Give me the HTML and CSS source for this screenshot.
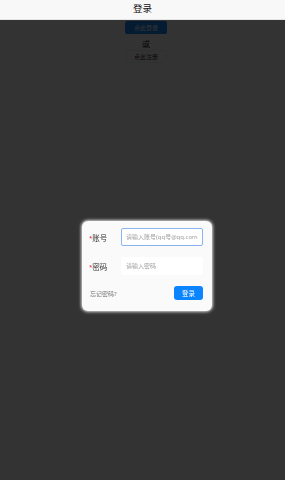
FILE: index.html
```html
<!DOCTYPE html>
<html>

<head>
    <meta charset="utf-8">
    <title>登录</title>
    <link rel="stylesheet" href="styles.css">
</head>

<body>
    <div class="navbar">登录</div>

    <div class="page">
        <button class="btn btn-primary">点此登录</button>
        <div class="or">或</div>
        <button class="btn btn-plain">点此注册</button>
    </div>

    <!-- login popup -->
    <div class="mask">
        <div class="dialog">
            <div class="field">
                <label><span class="req">*</span>账号</label>
                <input class="input focused" type="text" placeholder="请输入账号(qq号@qq.com)">
            </div>
            <div class="field">
                <label><span class="req">*</span>密码</label>
                <input class="input" type="password" placeholder="请输入密码">
            </div>
            <div class="footer">
                <span class="forgot">忘记密码?</span>
                <button class="submit">登录</button>
            </div>
        </div>
    </div>
</body>

</html>
```

FILE: styles.css
```css
/* login page with popup */
body {
    margin: 0;
    font-family: 'Noto Sans', 'Noto Sans CJK SC', sans-serif;
    background-color: #ffffff;
    color: #333333;
}

.navbar {
    height: 19px;
    line-height: 18px;
    text-align: center;
    font-size: 9.5px;
    color: #111111;
    background-color: #f8f8f8;
    border-bottom: 1px solid #e5e5e5;
}

.page {
    display: flex;
    flex-direction: column;
    align-items: center;
    padding-left: 7px;
}

.btn {
    width: 42px;
    height: 13px;
    padding: 0;
    font-family: inherit;
    font-size: 6px;
    border-radius: 2px;
}

.btn-primary {
    margin-top: 1px;
    background-color: #1989fa;
    border: 1px solid #1989fa;
    color: #ffffff;
}

.btn-plain {
    background-color: #ffffff;
    border: 1px solid #ebedf0;
    color: #333333;
}

.or {
    margin-top: 4px;
    font-size: 8px;
    line-height: 12px;
    color: #111111;
}

.mask {
    position: fixed;
    top: 20px;
    left: 0;
    right: 0;
    bottom: 0;
    background-color: rgba(0, 0, 0, 0.8);
    display: flex;
    justify-content: center;
    align-items: flex-start;
    padding-top: 201px;
}

.dialog {
    width: 130px;
    box-sizing: border-box;
    margin-left: 9px;
    padding: 7px 9px 11px 7px;
    background-color: #fafafa;
    border-radius: 6px;
    box-shadow: 0 0 3px 1px rgba(255, 255, 255, 0.8);
}

.field {
    display: flex;
    align-items: center;
    margin-bottom: 11px;
}

.field label {
    width: 32px;
    font-size: 7.5px;
    color: #333333;
}

.req {
    color: #ee0a24;
    font-size: 6px;
    vertical-align: 1px;
}

.input {
    width: 82px;
    height: 18px;
    box-sizing: border-box;
    padding: 0 4px;
    border: 1px solid #ffffff;
    border-radius: 2px;
    background-color: #ffffff;
    font-family: inherit;
    font-size: 6px;
    outline: none;
}

.input.focused {
    border-color: #8ab4f0;
}

.input::placeholder {
    color: #a0a0a0;
}

.footer {
    display: flex;
    justify-content: space-between;
    align-items: center;
    padding-left: 1px;
}

.forgot {
    font-size: 6px;
    color: #777777;
}

.submit {
    width: 29px;
    height: 14px;
    padding: 0;
    border: none;
    border-radius: 3px;
    background-color: #0a84ff;
    color: #ffffff;
    font-family: inherit;
    font-size: 6.5px;
}
```
